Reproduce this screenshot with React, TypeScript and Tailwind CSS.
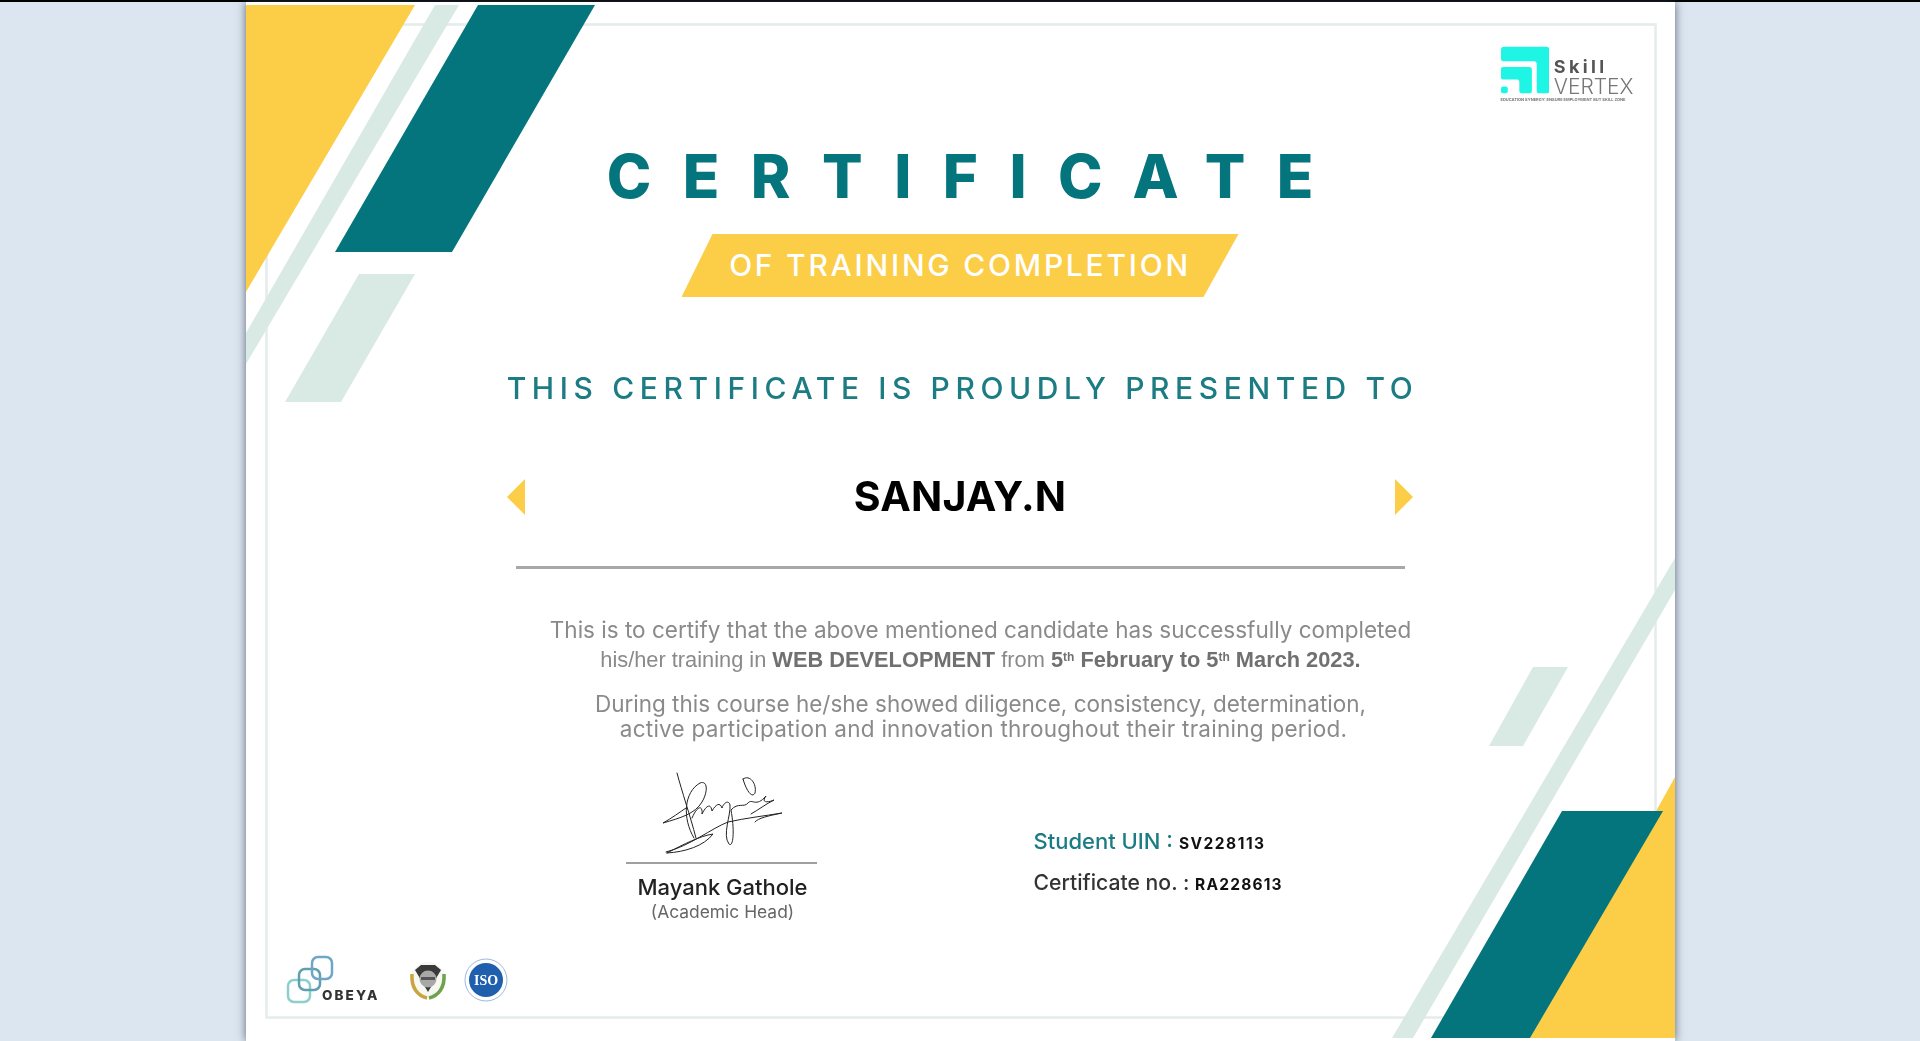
export default function App() {
  const mont = { fontFamily: '"Inter","Liberation Sans",sans-serif' };
  return (
    <div className="h-[1041px] overflow-hidden bg-[#dce6f0] flex flex-col" style={mont}>
      <div className="h-[2px] bg-black shrink-0" />
      <div className="mx-auto w-[1429px] h-[1039px] bg-white shadow-[0_0_9px_rgba(50,60,80,0.75)] relative overflow-hidden shrink-0">
        <div className="relative h-full blur-[0.5px]">
          <svg className="absolute inset-0 w-full h-full" viewBox="246 2 1429 1039">
            <rect x="266.5" y="24.5" width="1389" height="993" fill="none" stroke="#e4ecec" strokeWidth="2.5" />
            <rect x="246" y="2" width="1429" height="3" fill="#ffffff" />
            <polygon points="246,5 415,5 246,292" fill="#fccd47" />
            <polygon points="435,5 459,5 246,364 246,333" fill="#d9e9e3" />
            <polygon points="478,5 595,5 452,252 335,252" fill="#04747d" />
            <polygon points="359,274 415,274 341,402 285,402" fill="#d9e9e3" />
            <polygon points="1675,558 1675,590 1413,1038 1392,1038" fill="#d9e9e3" />
            <polygon points="1533,667 1568,667 1523,746 1489,746" fill="#d9e9e3" />
            <polygon points="1675,777 1675,1038 1530,1038" fill="#fccd47" />
            <polygon points="1562,811 1663,811 1530,1038 1431,1038" fill="#04747d" />
          </svg>

          <div className="absolute top-[42px] right-[41px] w-[133px]">
            <div className="flex items-start gap-[5px]">
              <svg width="50" height="50" viewBox="0 0 50 50">
                <path d="M3 2h44a3 3 0 0 1 3 3v43a2 2 0 0 1-2 2h-9a2 2 0 0 1-2-2V20a3 3 0 0 0-3-3H3a3 3 0 0 1-3-3V5a3 3 0 0 1 3-3z" fill="#1ef5e4" />
                <path d="M2 23h27a3 3 0 0 1 3 3v22a2 2 0 0 1-2 2H21a2 2 0 0 1-2-2V38a2 2 0 0 0-2-2H2a2 2 0 0 1-2-2V25a2 2 0 0 1 2-2z" fill="#1ef5e4" />
                <rect x="0" y="43" width="7" height="7" rx="2" fill="#1ef5e4" />
              </svg>
              <div className="pt-[14px] flex flex-col">
                <span className="text-[18px] leading-[18px] font-bold tracking-[3.4px] text-[#555]">Skill</span>
                <span className="text-[21px] leading-[21px] font-light tracking-[0px] text-[#777]">VERTEX</span>
              </div>
            </div>
            <div className="text-[4px] leading-[6px] whitespace-nowrap text-[#777] font-bold">EDUCATION SYNERGY: ENSURE EMPLOYMENT BUT SKILL ZONE</div>
          </div>

          <div className="relative flex flex-col items-center">
            <div className="mt-[144px] h-[60px] leading-[60px] text-[60px] font-extrabold text-[#04747d] tracking-[31.5px] mr-[-31.5px]">CERTIFICATE</div>
            <div className="mt-[28px] w-[557px] h-[63px] bg-[#fccd47] [clip-path:polygon(31px_0,100%_0,522px_100%,0_100%)] flex items-center justify-center text-white text-[30px] font-medium tracking-[2.75px]">
              OF TRAINING COMPLETION
            </div>
            <div className="mt-[76px] pl-[5px] h-[30px] leading-[30px] text-[30px] font-medium text-[#1c7c84] tracking-[5.6px] whitespace-nowrap">THIS CERTIFICATE IS PROUDLY PRESENTED TO</div>
            <div className="mt-[76px] w-[906px] h-[36px] flex items-center justify-between">
              <svg width="18" height="36" viewBox="0 0 18 36"><polygon points="18,0 18,36 0,18" fill="#fccd47" /></svg>
              <span className="text-[41px] font-bold text-black tracking-[0.2px]">SANJAY.N</span>
              <svg width="18" height="36" viewBox="0 0 18 36"><polygon points="0,0 0,36 18,18" fill="#fccd47" /></svg>
            </div>
            <div className="mt-[51px] w-[889px] h-[3px] bg-[#a8a8a8]" />
            <div className="pl-[41px] text-center text-[#8a8a8a] whitespace-nowrap">
              <div className="mt-[45px] leading-[31px] text-[22.5px]">This is to certify that the above mentioned candidate has successfully completed</div>
              <div className="leading-[30px] text-[21.8px] text-[#8a8a8a]" style={{ fontFamily: '"Liberation Sans",sans-serif' }}>
                his/her training in <b className="text-[#707070]">WEB DEVELOPMENT</b> from <b className="text-[#707070]">5<sup className="text-[12px]">th</sup> February to 5<sup className="text-[12px]">th</sup> March 2023.</b>
              </div>
              <div className="mt-[16px] leading-[25px] text-[22.5px]">During this course he/she showed diligence, consistency, determination,</div>
              <div className="leading-[25px] text-[22.5px] tracking-[0.26px] pl-[6px]">active participation and innovation throughout their training period.</div>
            </div>
            <div className="self-start mt-[29px] ml-[380px] flex">
              <div className="w-[191px] flex flex-col items-center">
                <svg width="191" height="92" viewBox="626 770 191 92" fill="none" stroke="#222" strokeWidth="1" strokeLinecap="round" strokeLinejoin="round">
                  <path d="M677 773C682 792 690 815 696 838" />
                  <path d="M694 838C682 818 684 792 700 783C708 780 708 792 702 802C695 814 680 818 663 823C672 818 680 812 686 808" />
                  <path d="M692 818C698 804 703 806 702 814C707 804 711 804 712 811C716 804 720 802 722 808C724 802 729 800 730 805C731 815 722 835 729 844C733 848 735 832 731 810C738 802 744 808 748 803C752 798 756 808 766 796C760 804 770 802 774 800C766 804 758 810 751 814" />
                  <path d="M743 779C750 774 757 784 755 793C752 799 746 790 743 779" />
                  <path d="M666 852C690 846 712 828 728 822C746 818 764 816 782 813C768 816 758 818 755 822" />
                  <path d="M667 853C685 852 704 846 713 834C700 836 684 844 667 853" />
                </svg>
                <div className="w-full h-[2px] bg-[#a0a0a0]" />
                <div className="mt-[11px] pl-[3px] h-[24px] leading-[24px] text-[22px] font-medium text-[#222] whitespace-nowrap">Mayank Gathole</div>
                <div className="mt-[2px] pl-[3px] h-[22px] leading-[22px] text-[17.4px] text-[#666] whitespace-nowrap">(Academic Head)</div>
              </div>
              <div className="ml-[217px] pt-[59px] flex flex-col gap-[17px] whitespace-nowrap">
                <div className="h-[24px] leading-[24px] text-[22px] font-medium text-[#1c7c84]">Student UIN : <span className="text-[15.5px] font-bold text-[#111] tracking-[1.5px]">SV228113</span></div>
                <div className="h-[24px] leading-[24px] text-[21.2px] font-medium text-[#333]">Certificate no. : <span className="text-[15.5px] font-bold text-[#111] tracking-[1.2px]">RA228613</span></div>
              </div>
            </div>
            <div className="self-start ml-[39px] mt-[32px] flex items-center">
              <div className="w-[97px] h-[50px]">
                <svg width="97" height="50" viewBox="285 955 97 50" fill="none">
                  <rect x="288" y="980" width="22" height="22" rx="6" stroke="#8fcfcb" strokeWidth="2.5" />
                  <rect x="299" y="969" width="21" height="21" rx="6" stroke="#5f9fb0" strokeWidth="2.5" />
                  <rect x="312" y="957" width="20" height="22" rx="6" stroke="#6fa6c8" strokeWidth="2.5" />
                  <text x="322" y="1000" fontSize="13.5" fontWeight="800" letterSpacing="2.1" fill="#333">OBEYA</text>
                </svg>
              </div>
              <div className="ml-[27px]">
                <svg width="38" height="44" viewBox="408 958 38 44">
                  <circle cx="427" cy="980" r="18" fill="#f8f8f2" />
                  <path d="M411 974C410 988 417 996 426 998" fill="none" stroke="#c9a441" strokeWidth="3.5" />
                  <path d="M443 974C444 988 437 996 428 998" fill="none" stroke="#6fa24f" strokeWidth="3.5" />
                  <path d="M414 970L420 965H434L440 970L427 992Z" fill="#3a3a3a" />
                  <circle cx="427" cy="979" r="8.5" fill="#a8a8a8" />
                  <rect x="420" y="977" width="14" height="3" fill="#555" />
                </svg>
              </div>
              <div className="ml-[17px]">
                <svg width="44" height="46" viewBox="464 956 44 46">
                  <circle cx="486" cy="979" r="21" fill="#fff" stroke="#9db8dc" strokeWidth="1" />
                  <circle cx="486" cy="979" r="17" fill="#1f5fae" />
                  <text x="486" y="984" textAnchor="middle" fontSize="14" fontWeight="900" fill="#fff" style={{ fontFamily: '"Liberation Serif",serif' }}>ISO</text>
                </svg>
              </div>
            </div>
          </div>
        </div>
      </div>
    </div>
  );
}
